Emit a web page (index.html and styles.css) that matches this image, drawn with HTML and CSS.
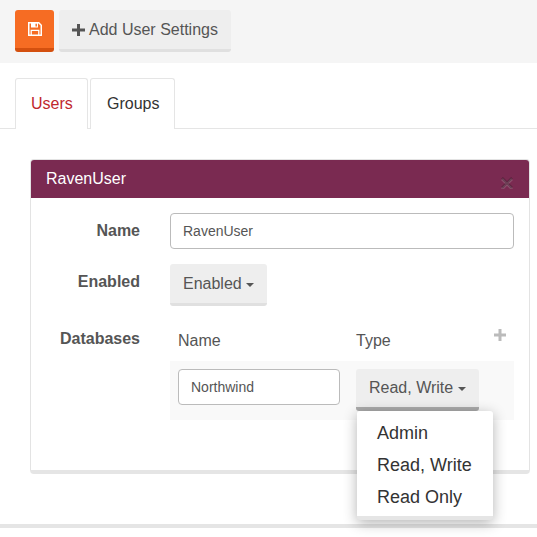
FILE: index.html
```html
<!DOCTYPE html>
<html lang="en">
<head>
<meta charset="utf-8">
<title>User Settings</title>
<link rel="stylesheet" href="styles.css">
</head>
<body>
<div class="toolbar">
  <button class="btn btn-save" type="button" aria-label="Save">
    <svg class="save-icon" viewBox="0 0 14 14" width="14" height="14"><path fill="none" stroke="#fff" stroke-width="1.500" d="M.75.75h10l2.500 2.500v10h-12.500z"/><path fill="#fff" d="M3 1h7v4.500H3z"/><path fill="#f66c23" d="M7.500 1.800h1.400v2.700H7.500z"/><path fill="none" stroke="#fff" stroke-width="1.300" d="M3.200 13V8.300h7.600V13"/></svg>
  </button>
  <button class="btn btn-add" type="button">
    <svg class="plus-icon" viewBox="0 0 13 12" width="13" height="12"><path fill="#555" d="M5 0h3v4.500h5v3H8V12H5V7.500H0v-3h5z"/></svg>
    <span>Add User Settings</span>
  </button>
</div>

<div class="tabs">
  <a class="tab tab-active">Users</a>
  <a class="tab tab-groups">Groups</a>
</div>

<section class="panel">
  <header class="panel-head">
    <span>RavenUser</span>
    <svg class="close" viewBox="0 0 12 12" width="12" height="12"><path fill="none" stroke="#fff" stroke-opacity=".22" stroke-width="2.600" d="M1 2l10 10M11 2L1 12"/><path fill="none" stroke="#000" stroke-opacity=".28" stroke-width="2.600" d="M1 1l10 10M11 1L1 11"/></svg>
  </header>
  <div class="panel-body">
    <div class="row row-name">
      <label class="label">Name</label>
      <input class="input input-wide" type="text" value="RavenUser">
    </div>
    <div class="row row-enabled">
      <label class="label">Enabled</label>
      <button class="btn btn-select" type="button">Enabled<i class="caret"></i></button>
    </div>
    <div class="row row-db">
      <label class="label">Databases</label>
      <div class="db">
        <div class="db-head">
          <span class="col-name">Name</span>
          <span class="col-type">Type</span>
          <svg class="db-plus" viewBox="0 0 12 12" width="12" height="12"><path fill="#bbb" d="M4.500 0h3v4.500H12v3H7.500V12h-3V7.500H0v-3h4.500z"/></svg>
        </div>
        <div class="db-row">
          <input class="input input-db" type="text" value="Northwind">
          <div class="dropdown">
            <button class="btn btn-select btn-open" type="button">Read, Write<i class="caret"></i></button>
            <ul class="menu">
              <li>Admin</li>
              <li>Read, Write</li>
              <li>Read Only</li>
            </ul>
          </div>
        </div>
      </div>
    </div>
  </div>
</section>

<div class="rule"></div>
</body>
</html>
```

FILE: styles.css
```css
* { box-sizing: border-box; }
html, body { margin: 0; padding: 0; }
body {
  width: 537px;
  height: 537px;
  overflow: hidden;
  background: #fff;
  font-family: "Liberation Sans", Arial, sans-serif;
  font-size: 16px;
  color: #555;
}
.toolbar {
  height: 63px;
  background: #f5f5f5;
  padding: 10px 15px 0;
  display: flex;
  align-items: flex-start;
  gap: 5px;
}
.btn {
  font-family: inherit;
  font-size: 16px;
  color: #555;
  background: #eee;
  border: 0;
  border-bottom: 3px solid #e0e0e0;
  border-radius: 3px;
  padding: 0;
  margin: 0;
  display: flex;
  align-items: center;
}
.btn-save {
  width: 39px;
  height: 42px;
  background: #f66c23;
  border-bottom: 4px solid #d4500f;
  justify-content: center;
}
.btn-add {
  width: 172px;
  height: 42px;
  padding-left: 13px;
  gap: 4px;
}
.tabs {
  margin-top: 15px;
  height: 51px;
  padding-left: 15px;
  display: flex;
  gap: 2px;
  border-bottom: 1px solid #e5e5e5;
}
.tab {
  height: 51px;
  padding: 0 15px 1px;
  display: flex;
  align-items: center;
  color: #333;
  border: 1px solid #e5e5e5;
  border-bottom: 0;
  border-radius: 3px 3px 0 0;
  background: #fff;
}
.tab-active {
  width: 73px;
  color: #c0272d;
  padding-bottom: 0;
}
.tab-groups { width: 85px; padding-left: 16px; }
.panel {
  margin: 30px 7px 0 30px;
  height: 315px;
  background: #fff;
  border: 1px solid #e3e3e3;
  border-bottom: 4px solid #e5e5e5;
  border-radius: 4px;
}
.panel-head {
  height: 38px;
  background: #7a2a51;
  color: #fff;
  border-radius: 3px 3px 0 0;
  padding: 0 16px 0 15px;
  display: flex;
  align-items: center;
  justify-content: space-between;
}
.close { margin-top: 8px; }
.panel-body { padding-top: 15px; }
.row { display: flex; align-items: flex-start; }
.label {
  width: 109px;
  margin-right: 30px;
  text-align: right;
  font-weight: bold;
  color: #555;
  line-height: 18px;
}
.row-name { height: 51px; }
.row-name .label { padding-top: 9px; }
.row-enabled { height: 60px; }
.row-enabled .label { padding-top: 9px; }
.row-db .label { padding-top: 6px; }
.input {
  font-family: inherit;
  font-size: 14px;
  color: #555;
  background: #fff;
  height: 36px;
  border: 1px solid #bbb;
  border-radius: 4px;
  padding: 0 12px;
  outline: 0;
}
.input-wide { width: 344px; }
.input-db { width: 162px; }
.btn-select {
  height: 42px;
  padding: 0 13px;
  white-space: nowrap;
}
.caret {
  display: inline-block;
  margin-left: 4px;
  margin-top: 2px;
  width: 0;
  height: 0;
  border-top: 4px solid #555;
  border-left: 4px solid transparent;
  border-right: 4px solid transparent;
}
.db { width: 344px; }
.db-head {
  height: 37px;
  display: flex;
  align-items: flex-start;
  padding: 8px 0 0 8px;
  line-height: 18px;
}
.col-name { width: 178px; }
.col-type { flex: 1; }
.db-plus { margin: -3px 8px 0 0; }
.db-row {
  height: 59px;
  background: #f9f9f9;
  padding: 8px 0 0 8px;
  display: flex;
  gap: 16px;
}
.dropdown { position: relative; }
.btn-open {
  width: 123px;
  border-bottom: 4px solid #aaa;
}
.btn-open .caret { margin-left: 5px; }
.menu {
  position: absolute;
  left: 1px;
  top: 42px;
  width: 136px;
  height: 109px;
  margin: 0;
  padding: 6px 0 0;
  list-style: none;
  background: #fff;
  border-bottom: 4px solid #e5e5e5;
  border-radius: 3px;
  box-shadow: 0 3px 14px rgba(0, 0, 0, .3);
  font-size: 18px;
  color: #333;
  z-index: 5;
}
.menu li {
  height: 32px;
  line-height: 32px;
  padding-left: 20px;
}
.rule {
  margin-top: 50px;
  height: 4px;
  background: #e5e5e5;
}
```
